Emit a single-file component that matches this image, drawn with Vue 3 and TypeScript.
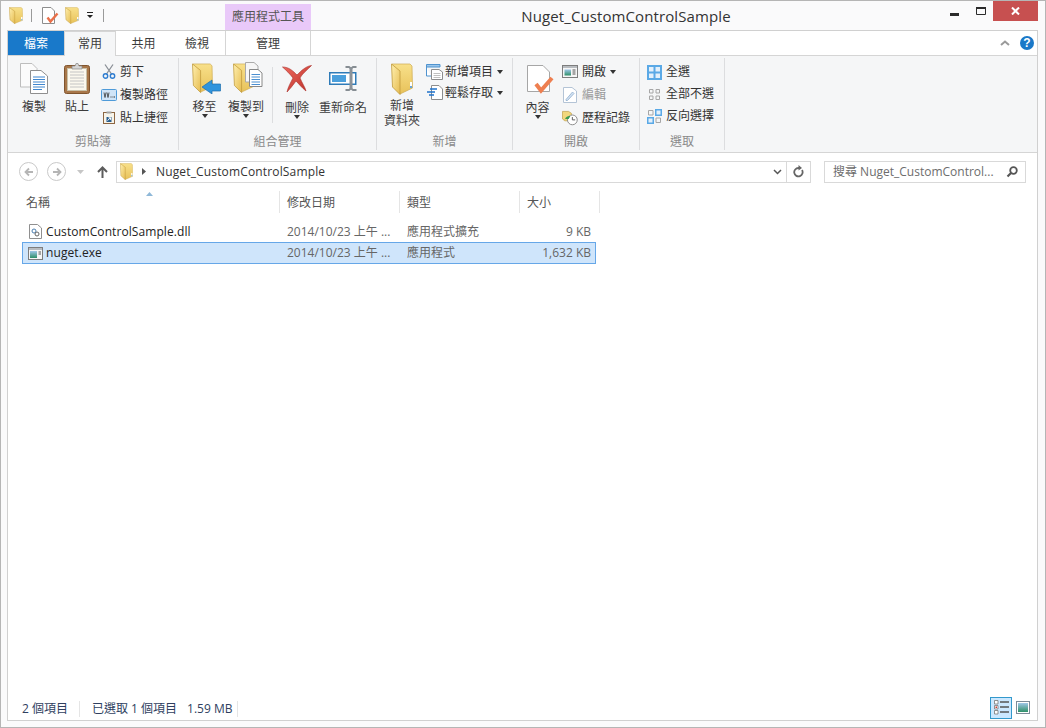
<script setup lang="ts">
interface FileRow {
  name: string
  date: string
  type: string
  size: string
  icon: string
  selected: boolean
}

const files: FileRow[] = [
  { name: 'CustomControlSample.dll', date: '2014/10/23 上午 ...', type: '應用程式擴充', size: '9 KB', icon: 'dll', selected: false },
  { name: 'nuget.exe', date: '2014/10/23 上午 ...', type: '應用程式', size: '1,632 KB', icon: 'exe', selected: true }
]

const columns = [
  { label: '名稱', width: 258 },
  { label: '修改日期', width: 120 },
  { label: '類型', width: 120 },
  { label: '大小', width: 80 }
]
</script>

<template>
  <div class="window">
    <svg width="0" height="0" class="defs">
      <defs>
        <linearGradient id="fold" x1="0" y1="0" x2="1" y2="1">
          <stop offset="0" stop-color="#fff0b0" />
          <stop offset="1" stop-color="#e6bc50" />
        </linearGradient>
        <linearGradient id="foldback" x1="0" y1="0" x2="0" y2="1">
          <stop offset="0" stop-color="#f8e08a" />
          <stop offset="1" stop-color="#e8c25a" />
        </linearGradient>
        <linearGradient id="thumb" x1="0" y1="0" x2="0" y2="1">
          <stop offset="0" stop-color="#9fc7e8" />
          <stop offset="1" stop-color="#2f9068" />
        </linearGradient>
        <linearGradient id="xred" x1="0" y1="0" x2="1" y2="1">
          <stop offset="0" stop-color="#ee6a60" />
          <stop offset="1" stop-color="#bb2f28" />
        </linearGradient>
        <symbol id="folder" viewBox="0 0 22 32" preserveAspectRatio="none">
          <path d="M1 1 L19 1 L21 3 L21.500 25 L9 31 Z" fill="url(#foldback)" stroke="#cdaa50" stroke-width=".7" />
          <path d="M.5 1 L9 8 V31.500 L1.500 24 Z" fill="url(#fold)" stroke="#c09a3c" stroke-width=".8" />
          <path d="M20 19 v6" stroke="#fff" stroke-width="2" />
          <path d="M20 23 v2" stroke="#6aa5d8" stroke-width="2" />
        </symbol>
      </defs>
    </svg>

    <header class="titlebar">
      <div class="qat">
        <svg class="q-folder" width="14" height="17"><use href="#folder" /></svg>
        <i class="q-sep"></i>
        <svg class="q-doc" width="17" height="17" viewBox="0 0 17 17">
          <path d="M.5 .5 H9 L12.5 4 V16.5 H.5 Z" fill="#fff" stroke="#8d8d8d" />
          <path d="M5.500 10.500 L8.500 14.500 L15.500 6.500" fill="none" stroke="#e9704a" stroke-width="2.400" />
        </svg>
        <svg class="q-folder2" width="14" height="17"><use href="#folder" /></svg>
        <svg class="q-drop" width="8" height="7" viewBox="0 0 8 7"><path d="M1 0 H7 V1 H1 Z M1 3 H7 L4 6 Z" fill="#222" /></svg>
        <i class="q-sep q-sep2"></i>
      </div>
      <div class="context-title">應用程式工具</div>
      <div class="title">Nuget_CustomControlSample</div>
      <div class="controls">
        <svg class="c-min" width="9" height="3"><rect width="9" height="3" fill="#2b2b2b" /></svg>
        <svg class="c-max" width="10" height="8" viewBox="0 0 10 8"><path d="M.5 .5 H9.500 V7.500 H.5 Z" fill="none" stroke="#2b2b2b" /><rect width="10" height="2" fill="#2b2b2b" /></svg>
        <div class="c-close">
          <svg width="9" height="8" viewBox="0 0 9 8"><path d="M1 .5 L8 7.500 M8 .5 L1 7.500" stroke="#fff" stroke-width="2" /></svg>
        </div>
      </div>
    </header>

    <div class="frame">
      <nav class="tabs">
        <div class="tab tab-file">檔案</div>
        <div class="tab tab-home">常用</div>
        <div class="tab tab-share">共用</div>
        <div class="tab tab-view">檢視</div>
        <div class="tab tab-manage">管理</div>
        <div class="tabs-end">
          <svg width="10" height="6" viewBox="0 0 10 6"><path d="M1 5 L5 1.500 L9 5" fill="none" stroke="#9a9a9a" stroke-width="2" /></svg>
          <div class="help">?</div>
        </div>
      </nav>

      <section class="ribbon">
        <!-- 剪貼簿 -->
        <div class="group g-clip">
          <div class="group-body">
            <div class="big b-copy">
              <svg width="28" height="31" viewBox="0 0 28 31">
                <path d="M.5 .5 H12 L17 5.500 V24 H.5 Z" fill="#fbfbfb" stroke="#bdbdbd" />
                <path d="M10.500 7.500 H21 L27.500 13 V30.500 H10.500 Z" fill="#fff" stroke="#8f8f8f" />
                <path d="M13 14 H25 M13 16.500 H25 M13 19 H25 M13 21.500 H25 M13 24 H25 M13 26.500 H22" stroke="#3f86cf" />
              </svg>
              <span>複製</span>
            </div>
            <div class="big b-paste">
              <svg width="26" height="31" viewBox="0 0 26 31">
                <rect x=".5" y="2.500" width="25" height="28" rx="2" fill="#a8774a" stroke="#80552e" />
                <rect x="3.500" y="5.500" width="19" height="22" fill="#fbf8ee" stroke="#c9c1a8" />
                <path d="M6 9 H20 M6 12 H20 M6 15 H20 M6 18 H20 M6 21 H20 M6 24 H20" stroke="#c4c4c4" />
                <path d="M8 6 V3 H11 L12 .5 H14 L15 3 H18 V6 Z" fill="#d6d6d6" stroke="#888" stroke-width=".7" />
              </svg>
              <span>貼上</span>
            </div>
            <div class="smalls s-clip">
              <div class="small">
                <svg width="14" height="15" viewBox="0 0 14 15">
                  <path d="M3 .5 L9.500 10 M11 .5 L4.500 10" stroke="#8a8f96" stroke-width="1.300" />
                  <circle cx="3.500" cy="12" r="2.200" fill="none" stroke="#2e7dd1" stroke-width="1.400" />
                  <circle cx="10.500" cy="12" r="2.200" fill="none" stroke="#2e7dd1" stroke-width="1.400" />
                </svg>
                <span>剪下</span>
              </div>
              <div class="small">
                <svg width="16" height="12" viewBox="0 0 16 12">
                  <rect x=".5" y=".5" width="15" height="11" rx="1" fill="#cfe4f7" stroke="#4f9bd9" />
                  <path d="M3 3.500 L4 8.500 L5 3.500 M6 3.500 L7 8.500 L8 3.500" fill="none" stroke="#333" stroke-width=".8" />
                  <path d="M9.500 8 h1 M11.500 8 h1 M13 8 h1" stroke="#333" />
                </svg>
                <span>複製路徑</span>
              </div>
              <div class="small">
                <svg width="12" height="13" viewBox="0 0 12 13">
                  <rect x=".5" y="1.500" width="11" height="11" fill="#f7f4ea" stroke="#8d6642" />
                  <rect x="3.500" y=".5" width="5" height="2" fill="#a4a4a4" />
                  <path d="M3.500 6 H8.500 V11 H3.500 Z" fill="#2a5f8f" />
                  <path d="M4.500 9.500 L7.500 6.800 M5.500 6.800 H7.500 V8.800" fill="none" stroke="#fff" />
                </svg>
                <span>貼上捷徑</span>
              </div>
            </div>
          </div>
          <div class="group-label">剪貼簿</div>
        </div>

        <!-- 組合管理 -->
        <div class="group g-org">
          <div class="group-body">
            <div class="big b-move">
              <svg width="29" height="31" viewBox="0 0 29 31">
                <use href="#folder" width="21" height="30" />
                <path d="M10 24 L20 17 V21 H28.500 V28 H20 V31 Z" fill="#2f94dd" stroke="#1e6fae" stroke-width=".7" />
              </svg>
              <span>移至</span>
              <b class="caret"></b>
            </div>
            <div class="big b-copyto">
              <svg width="30" height="31" viewBox="0 0 30 31">
                <use href="#folder" y="1" width="21" height="30" />
                <path d="M12.500 .5 H21 L25 4 V20 H12.500 Z" fill="#f6f6f6" stroke="#aaa" />
                <path d="M16.500 7.500 H25 L29 11 V24.500 H16.500 Z" fill="#fff" stroke="#888" />
                <path d="M18.500 12.500 H27 M18.500 15 H27 M18.500 17.500 H27 M18.500 20 H27 M18.500 22.500 H27" stroke="#4b8fd0" />
              </svg>
              <span>複製到</span>
              <b class="caret"></b>
            </div>
            <i class="inner-sep"></i>
            <div class="big b-del">
              <svg width="30" height="28" viewBox="0 0 30 28">
                <path d="M.5 2 C7 2 11 6 15 10 C19 6 24 1 29.500 .5 C25 5 20 9 18 13 C20 18 23 22 24 26 C20 23 17 19 14 16 C11 20 8 24 5 27 C6 22 9 17 11 13 C8 9 4 5 .5 2 Z" fill="url(#xred)" stroke="#a92c26" stroke-width=".6" />
              </svg>
              <span>刪除</span>
              <b class="caret"></b>
            </div>
            <div class="big b-rename">
              <svg width="29" height="25" viewBox="0 0 29 25">
                <rect x=".75" y="6.750" width="26" height="11.500" fill="#fff" stroke="#2e7bb8" stroke-width="1.500" />
                <rect x="3" y="9" width="14" height="7" fill="#4a9fdc" />
                <path d="M16.500 1 H20 L22 2.500 L24 1 H27.500 M16.500 24 H20 L22 22.500 L24 24 H27.500" fill="none" stroke="#868d93" stroke-width="1.800" />
                <rect x="20.500" y="2" width="3" height="21" fill="#8b9298" />
              </svg>
              <span>重新命名</span>
            </div>
          </div>
          <div class="group-label">組合管理</div>
        </div>

        <!-- 新增 -->
        <div class="group g-new">
          <div class="group-body">
            <div class="big b-newfolder">
              <svg width="22" height="32"><use href="#folder" /></svg>
              <span>新增<br />資料夾</span>
            </div>
            <div class="smalls s-new">
              <div class="small">
                <svg width="17" height="16" viewBox="0 0 17 16">
                  <path d="M.5 .5 H14 V3 H.5 Z" fill="#9cc7ec" stroke="#4f93cf" />
                  <path d="M.5 3 V12 H5" fill="#fff" stroke="#4f93cf" />
                  <path d="M5.500 5.500 H13 L16.500 8 V15.500 H5.500 Z" fill="#fff" stroke="#8d8d8d" />
                  <path d="M7.500 9.500 H14.500 M7.500 11.500 H14.500 M7.500 13.500 H14.500" stroke="#c0c0c0" />
                </svg>
                <span>新增項目</span>
                <b class="caret-s"></b>
              </div>
              <div class="small">
                <svg width="17" height="15" viewBox="0 0 17 15">
                  <path d="M5.500 .5 H13 L16.500 4 V14.500 H5.500 Z" fill="#fff" stroke="#8d8d8d" />
                  <path d="M4 4 H11 M1 7 H9 M3 10 H8" stroke="#1f73cc" stroke-width="1.300" />
                </svg>
                <span>輕鬆存取</span>
                <b class="caret-s"></b>
              </div>
            </div>
          </div>
          <div class="group-label">新增</div>
        </div>

        <!-- 開啟 -->
        <div class="group g-open">
          <div class="group-body">
            <div class="big b-props">
              <svg width="27" height="29" viewBox="0 0 27 29">
                <path d="M.5 .5 H16 L22.500 7 V26.500 H.5 Z" fill="#fff" stroke="#a6a6a6" />
                <path d="M9 19 L14 25.500 L25 13" fill="none" stroke="#ee7f50" stroke-width="4" />
              </svg>
              <span>內容</span>
              <b class="caret"></b>
            </div>
            <div class="smalls s-open">
              <div class="small">
                <svg width="16" height="13" viewBox="0 0 16 13">
                  <rect x=".5" y=".5" width="15" height="12" fill="#f6f6f6" stroke="#7d7d7d" />
                  <rect x="1" y="1" width="14" height="2" fill="#b8bcc0" />
                  <rect x="2.500" y="4.500" width="6.500" height="6" fill="url(#thumb)" />
                  <path d="M10.500 5 H13.500 M10.500 7 H13.500 M10.500 9 H13.500" stroke="#555" />
                </svg>
                <span>開啟</span>
                <b class="caret-s"></b>
              </div>
              <div class="small disabled">
                <svg width="16" height="16" viewBox="0 0 14 16">
                  <path d="M.5 .5 H9 L13.500 4 V15.500 H.5 Z" fill="#fff" stroke="#b4c4d6" />
                  <path d="M3 12.500 L9.500 5 L11 6.500 L4.500 13.500 H3 Z" fill="#d3e2f2" stroke="#8fafcf" stroke-width=".8" />
                </svg>
                <span>編輯</span>
              </div>
              <div class="small">
                <svg width="16" height="16" viewBox="0 0 17 16">
                  <path d="M.5 1 H7 L10 3 V11 H3 L.5 9 Z" fill="#f2d77c" stroke="#bc9a40" stroke-width=".7" />
                  <circle cx="11" cy="10" r="5.200" fill="#fff" stroke="#888" />
                  <path d="M11 7 V10 H14" fill="none" stroke="#555" />
                  <path d="M3 10 A5 5 0 0 1 9 6 L7 9 H3 Z" fill="#3a9a4f" />
                </svg>
                <span>歷程記錄</span>
              </div>
            </div>
          </div>
          <div class="group-label">開啟</div>
        </div>

        <!-- 選取 -->
        <div class="group g-select">
          <div class="group-body">
            <div class="smalls s-select">
              <div class="small">
                <svg width="15" height="15" viewBox="0 0 15 15">
                  <rect width="15" height="15" fill="#5aa9e6" />
                  <rect x="2" y="2" width="4.500" height="4.500" fill="#e3f0fb" />
                  <rect x="8.500" y="2" width="4.500" height="4.500" fill="#e3f0fb" />
                  <rect x="2" y="8.500" width="4.500" height="4.500" fill="#e3f0fb" />
                  <rect x="8.500" y="8.500" width="4.500" height="4.500" fill="#e3f0fb" />
                </svg>
                <span>全選</span>
              </div>
              <div class="small">
                <svg width="15" height="15" viewBox="0 0 15 15">
                  <path d="M2.500 2.500 H6 V6 H2.500 Z M9 2.500 H12.500 V6 H9 Z M2.500 9 H6 V12.500 H2.500 Z M9 9 H12.500 V12.500 H9 Z" fill="none" stroke="#a6a6a6" />
                </svg>
                <span>全部不選</span>
              </div>
              <div class="small">
                <svg width="15" height="15" viewBox="0 0 15 15">
                  <path d="M1.500 1.500 H6 V6 H1.500 Z M9 9 H13.500 V13.500 H9 Z" fill="none" stroke="#a6a6a6" />
                  <rect x="8" y="0" width="7" height="7" fill="#5aa9e6" />
                  <rect x="9.500" y="1.500" width="4" height="4" fill="#e3f0fb" />
                  <rect x="0" y="8" width="7" height="7" fill="#5aa9e6" />
                  <rect x="1.500" y="9.500" width="4" height="4" fill="#e3f0fb" />
                </svg>
                <span>反向選擇</span>
              </div>
            </div>
          </div>
          <div class="group-label">選取</div>
        </div>
      </section>

      <div class="addressbar">
        <button class="nav-round">
          <svg width="10" height="10" viewBox="0 0 10 10"><path d="M9 5 H2 M5 1.500 L1.500 5 L5 8.500" fill="none" stroke="#b5b5b5" stroke-width="1.800" /></svg>
        </button>
        <button class="nav-round nav-next">
          <svg width="10" height="10" viewBox="0 0 10 10"><path d="M1 5 H8 M5 1.500 L8.500 5 L5 8.500" fill="none" stroke="#b5b5b5" stroke-width="1.800" /></svg>
        </button>
        <svg class="nav-caret" width="7" height="4"><path d="M0 0 H7 L3.500 4 Z" fill="#c6c6c6" /></svg>
        <svg class="nav-up" width="11" height="12" viewBox="0 0 11 12"><path d="M5.500 12 V2 M1 6 L5.500 1.500 L10 6" fill="none" stroke="#5c5c5c" stroke-width="2" /></svg>
        <div class="address">
          <svg class="addr-folder" width="13" height="17"><use href="#folder" /></svg>
          <svg class="addr-sep" width="4" height="7"><path d="M0 0 L4 3.500 L0 7 Z" fill="#555" /></svg>
          <span class="addr-text">Nuget_CustomControlSample</span>
          <svg class="addr-down" width="9" height="6" viewBox="0 0 9 6"><path d="M1 1 L4.500 4.500 L8 1" fill="none" stroke="#555" stroke-width="1.500" /></svg>
          <div class="addr-refresh">
            <svg width="11" height="13" viewBox="0 0 11 13"><path d="M9 5 A4.200 4.200 0 1 1 5.500 3 H7" fill="none" stroke="#666" stroke-width="1.800" /><path d="M5.500 0 L9 3 L5.500 5.500 Z" fill="#666" /></svg>
          </div>
        </div>
        <div class="search">
          <span>搜尋 Nuget_CustomControl...</span>
          <svg width="12" height="12" viewBox="0 0 12 12"><circle cx="7.500" cy="4.500" r="3.300" fill="none" stroke="#555" stroke-width="1.800" /><path d="M5 7 L1.500 10.500" stroke="#555" stroke-width="2.200" /></svg>
        </div>
      </div>

      <main class="content">
        <div class="list-head">
          <svg class="sort" width="7" height="4"><path d="M3.500 0 L7 4 H0 Z" fill="#8fb8d8" /></svg>
          <div v-for="col in columns" :key="col.label" class="col" :style="{ width: col.width + 'px' }">{{ col.label }}</div>
        </div>
        <div class="rows">
          <div v-for="file in files" :key="file.name" class="row" :class="{ selected: file.selected }">
            <div class="cell c-name">
              <svg v-if="file.icon === 'dll'" width="13" height="15" viewBox="0 0 13 15">
                <path d="M.5 .5 H8.500 L12.500 4 V14.500 H.5 Z" fill="#fff" stroke="#8f8f8f" />
                <circle cx="5" cy="7" r="2" fill="none" stroke="#4c7fb0" />
                <circle cx="8" cy="10" r="2" fill="none" stroke="#666" />
              </svg>
              <svg v-else width="15" height="13" viewBox="0 0 15 13">
                <rect x=".5" y=".5" width="14" height="12" fill="#f6f6f6" stroke="#7d7d7d" />
                <rect x="1" y="1" width="13" height="2" fill="#b8bcc0" />
                <rect x="2" y="4" width="7" height="7" fill="url(#thumb)" />
                <path d="M10.500 5 H13 M10.500 7 H13" stroke="#555" />
              </svg>
              <span>{{ file.name }}</span>
            </div>
            <div class="cell c-date">{{ file.date }}</div>
            <div class="cell c-type">{{ file.type }}</div>
            <div class="cell c-size">{{ file.size }}</div>
          </div>
        </div>
      </main>

      <footer class="status">
        <span class="st-count">2 個項目</span>
        <span class="st-sel">已選取 1 個項目</span>
        <span class="st-size">1.59 MB</span>
        <div class="views">
          <div class="view active">
            <svg width="17" height="17" viewBox="0 0 17 17">
              <path d="M1.500 1.500 H5 V5 H1.500 Z M1.500 6.500 H5 V10 H1.500 Z M1.500 11.500 H5 V15 H1.500 Z" fill="#fff" stroke="#777" stroke-width=".8" />
              <rect x="2.500" y="7.500" width="1.500" height="1.500" fill="#d23a2e" />
              <path d="M7 3 H16 M7 8 H16 M7 13 H16" stroke="#555" stroke-width="1.300" />
            </svg>
          </div>
          <div class="view">
            <svg width="14" height="13" viewBox="0 0 14 13">
              <rect x=".5" y=".5" width="13" height="12" fill="#fff" stroke="#7d8b99" />
              <rect x="2" y="2" width="10" height="9" fill="url(#thumb)" />
            </svg>
          </div>
        </div>
      </footer>
    </div>
  </div>
</template>

<style>
html,
body {
  margin: 0;
  overflow: hidden;
  background: #fff;
}
</style>

<style scoped>
.window {
  box-sizing: border-box;
  width: 1046px;
  height: 728px;
  border: 1px solid #b5b5b5;
  background: #fafafb;
  display: flex;
  flex-direction: column;
  font-family: "Open Sans", "Noto Sans CJK TC", sans-serif;
  font-size: 12px;
  color: #333;
  line-height: 16px;
  overflow: hidden;
}
.defs {
  position: absolute;
}
svg {
  display: block;
  flex: none;
}

/* title bar */
.titlebar {
  height: 29px;
  display: flex;
  flex: none;
}
.qat {
  width: 224px;
  flex: none;
  display: flex;
  align-items: center;
  padding-left: 8px;
  box-sizing: border-box;
}
.q-sep {
  width: 1px;
  height: 13px;
  background: #9a9a9a;
  margin: 0 10px 0 8px;
}
.q-sep2 {
  margin: 0 0 0 9px;
}
.q-folder2 {
  margin-left: 6px;
}
.q-drop {
  margin-left: 7px;
}
.context-title {
  width: 86px;
  height: 26px;
  margin-top: 3px;
  background: #e9c9f9;
  text-align: center;
  line-height: 26px;
  color: #555;
  flex: none;
}
.title {
  width: 420px;
  margin-left: 105px;
  font-size: 15px;
  line-height: 30px;
  text-align: center;
  color: #333;
  letter-spacing: .1px;
  flex: none;
}
.controls {
  flex: 1;
  display: flex;
  align-items: flex-start;
}
.c-min {
  margin: 12px 0 0 114px;
}
.c-max {
  margin: 6px 0 0 17px;
}
.c-close {
  width: 45px;
  height: 20px;
  margin-left: 7px;
  background: #c75050;
  display: flex;
  align-items: center;
  justify-content: center;
}

/* frame */
.frame {
  margin: 0 7px 6px 6px;
  border: 1px solid #d0d0d0;
  flex: 1;
  background: #fff;
  display: flex;
  flex-direction: column;
  min-height: 0;
}

/* tabs */
.tabs {
  height: 24px;
  flex: none;
  display: flex;
  border-bottom: 1px solid #d5d5d5;
  position: relative;
}
.tab {
  text-align: center;
  line-height: 25px;
  height: 24px;
  box-sizing: border-box;
  color: #3c3c3c;
}
.tab-file {
  width: 56px;
  background: #1979ca;
  color: #fff;
}
.tab-home {
  width: 52px;
  background: #f5f6f7;
  height: 25px;
  border: 1px solid #d5d5d5;
  border-bottom: 0;
  position: relative;
  z-index: 1;
  line-height: 24px;
}
.tab-share {
  width: 55px;
}
.tab-view {
  width: 54px;
  padding-right: 2px;
}
.tab-manage {
  width: 86px;
  border-left: 1px solid #d5d5d5;
  border-right: 1px solid #d5d5d5;
}
.tabs-end {
  flex: 1;
  display: flex;
  align-items: center;
  justify-content: flex-end;
  gap: 10px;
  padding-right: 3px;
}
.help {
  width: 14px;
  height: 14px;
  border-radius: 50%;
  background: #1a78c8;
  color: #fff;
  font: bold 12px/14px "Liberation Sans", sans-serif;
  text-align: center;
}

/* ribbon */
.ribbon {
  height: 96px;
  flex: none;
  display: flex;
  background: #f5f6f7;
  border-bottom: 1px solid #d5d5d5;
}
.group {
  flex: none;
  box-sizing: border-box;
  border-right: 1px solid #dcdddf;
  margin: 2px 0;
  display: flex;
  flex-direction: column;
}
.group-body {
  height: 76px;
  display: flex;
  position: relative;
}
.group-label {
  text-align: center;
  color: #8a8a8a;
  line-height: 15px;
}
.g-clip {
  width: 171px;
}
.g-org {
  width: 198px;
}
.g-new {
  width: 136px;
}
.g-open {
  width: 127px;
}
.g-select {
  width: 85px;
}
.big {
  display: flex;
  flex-direction: column;
  align-items: center;
  text-align: center;
  flex: none;
  position: relative;
}
.big span {
  line-height: 15px;
  color: #3c3c3c;
  white-space: nowrap;
}
.b-copy {
  width: 28px;
  margin: 5px 0 0 12px;
}
.b-paste {
  width: 26px;
  margin: 5px 0 0 16px;
}
.big svg {
  margin-bottom: 5px;
}
.caret {
  width: 0;
  height: 0;
  border: 3.500px solid transparent;
  border-top: 4px solid #333;
  border-bottom: 0;
}
.caret-s {
  width: 0;
  height: 0;
  border: 3px solid transparent;
  border-top: 4px solid #333;
  border-bottom: 0;
  margin-left: 4px;
}
.smalls {
  display: flex;
  flex-direction: column;
  flex: none;
}
.small {
  display: flex;
  align-items: center;
  height: 23px;
  position: relative;
  white-space: nowrap;
}
.small svg {
  margin-right: 4px;
}
.small.disabled span {
  color: #9a9a9a;
}
.s-clip {
  margin: 2px 0 0 11px;
}
.s-clip .small svg {
  width: 16px;
  margin-right: 3px;
}
.b-move {
  width: 29px;
  margin: 5px 0 0 13px;
}
.b-move span,
.b-move .caret,
.b-copyto span,
.b-copyto .caret {
  margin-right: 4px;
}
.b-copyto {
  width: 30px;
  margin: 4px 0 0 12px;
}
.b-copyto svg {
  margin-bottom: 6px;
}
.inner-sep {
  width: 1px;
  height: 56px;
  margin: 9px 0 0 9px;
  background: #dcdddf;
}
.b-del {
  width: 30px;
  margin: 7px 0 0 9px;
}
.b-del svg {
  margin-bottom: 7px;
}
.b-rename {
  width: 50px;
  margin: 8px 0 0 6px;
}
.b-rename svg {
  margin-bottom: 9px;
}
.b-newfolder {
  width: 40px;
  margin: 5px 0 0 5px;
}
.b-newfolder svg {
  margin-bottom: 3px;
}
.s-new {
  margin: 3px 0 0 4px;
}
.s-new .small {
  height: 21px;
}
.s-new .small svg {
  margin-right: 2px;
}
.b-props {
  width: 27px;
  margin: 7px 0 0 14px;
}
.b-props svg {
  margin-bottom: 6px;
}
.b-props span,
.b-props .caret {
  margin-right: 6px;
}
.s-open {
  margin: 2px 0 0 8px;
}
.s-select {
  margin: 3px 0 0 7px;
}
.s-select .small {
  height: 22px;
}

/* address */
.addressbar {
  height: 36px;
  flex: none;
  display: flex;
  align-items: center;
  padding-top: 1px;
  box-sizing: border-box;
}
.nav-round {
  all: unset;
  box-sizing: border-box;
  width: 19px;
  height: 19px;
  border: 1px solid #c9c9c9;
  border-radius: 50%;
  display: flex;
  align-items: center;
  justify-content: center;
  margin-left: 11px;
  flex: none;
}
.nav-next {
  margin-left: 9px;
}
.nav-caret {
  margin-left: 11px;
}
.nav-up {
  margin-left: 13px;
}
.address {
  width: 695px;
  height: 22px;
  box-sizing: border-box;
  margin-left: 8px;
  border: 1px solid #d9d9d9;
  display: flex;
  align-items: center;
  flex: none;
}
.addr-folder {
  margin-left: 3px;
}
.addr-sep {
  margin-left: 9px;
}
.addr-text {
  margin-left: 10px;
  color: #333;
  flex: 1;
  letter-spacing: .15px;
}
.addr-down {
  margin-right: 4px;
}
.addr-refresh {
  width: 23px;
  height: 100%;
  border-left: 1px solid #d9d9d9;
  display: flex;
  align-items: center;
  justify-content: center;
}
.search {
  width: 202px;
  height: 22px;
  box-sizing: border-box;
  margin-left: 13px;
  border: 1px solid #d9d9d9;
  display: flex;
  align-items: center;
  justify-content: space-between;
  padding: 0 7px 0 8px;
  color: #6d6d6d;
  flex: none;
}

/* list */
.content {
  flex: 1;
  padding-left: 14px;
  min-height: 0;
  position: relative;
}
.sort {
  position: absolute;
  left: 124px;
  top: 3px;
}
.list-head {
  display: flex;
  height: 22px;
  padding-top: 2px;
  position: relative;
}
.col {
  box-sizing: border-box;
  color: #555;
  line-height: 22px;
  padding: 1px 0 0 4px;
  border-right: 1px solid #e5e5e5;
  flex: none;
}
.col + .col {
  padding-left: 7px;
}
.rows {
  margin-top: 7px;
}
.row {
  display: flex;
  width: 574px;
  height: 22px;
  box-sizing: border-box;
  border: 1px solid transparent;
  align-items: center;
  padding-top: 1px;
}
.row.selected {
  background: #cfe5fb;
  border-color: #66a7e8;
  padding-top: 0;
}
.cell {
  flex: none;
  white-space: nowrap;
  color: #666;
}
.c-name {
  width: 264px;
  display: flex;
  align-items: center;
  padding-left: 5px;
  box-sizing: border-box;
  color: #222;
  letter-spacing: .08px;
}
.c-name svg {
  margin-right: 3px;
  width: 15px;
}
.c-date {
  width: 120px;
}
.c-type {
  width: 112px;
}
.c-size {
  width: 72px;
  text-align: right;
}

/* status */
.status {
  height: 26px;
  flex: none;
  display: flex;
  align-items: center;
  box-sizing: border-box;
  color: #2f3f5f;
  padding: 4px 0 0 14px;
  position: relative;
}
.st-count {
  width: 57px;
  border-right: 1px solid #e5e5e5;
  flex: none;
}
.st-sel {
  margin-left: 12px;
  flex: none;
}
.st-size {
  margin-left: 10px;
  width: 50px;
  border-right: 1px solid #e5e5e5;
  flex: none;
}
.views {
  margin: -3px 0 0 auto;
  display: flex;
  align-items: center;
  padding-right: 3px;
}
.view {
  width: 22px;
  height: 22px;
  box-sizing: border-box;
  display: flex;
  align-items: center;
  justify-content: center;
  border: 1px solid transparent;
}
.view.active {
  background: #cce8ff;
  border: 1px solid #3399cc;
}
</style>
